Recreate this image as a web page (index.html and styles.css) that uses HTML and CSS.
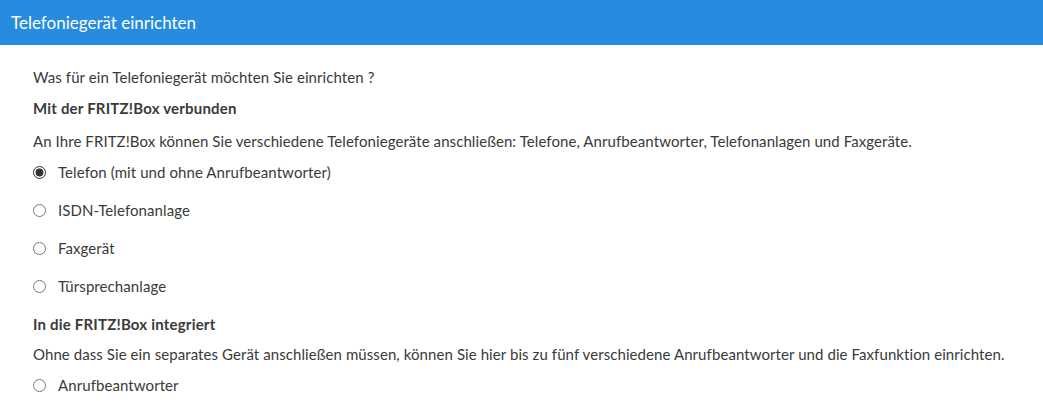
FILE: index.html
```html
<!DOCTYPE html>
<html lang="de">
<head>
<meta charset="utf-8">
<title>Telefoniegerät einrichten</title>
<link rel="stylesheet" href="styles.css">
</head>
<body>
<header class="bar">Telefoniegerät einrichten</header>
<main class="content">
  <p class="intro">Was für ein Telefoniegerät möchten Sie einrichten ?</p>
  <h2 class="heading">Mit der FRITZ!Box verbunden</h2>
  <p class="desc">An Ihre FRITZ!Box können Sie verschiedene Telefoniegeräte anschließen: Telefone, Anrufbeantworter, Telefonanlagen und Faxgeräte.</p>
  <div class="options">
    <label class="option"><input type="radio" name="dev" checked><span>Telefon (mit und ohne Anrufbeantworter)</span></label>
    <label class="option"><input type="radio" name="dev"><span>ISDN-Telefonanlage</span></label>
    <label class="option"><input type="radio" name="dev"><span>Faxgerät</span></label>
    <label class="option"><input type="radio" name="dev"><span>Türsprechanlage</span></label>
  </div>
  <h2 class="heading heading-second">In die FRITZ!Box integriert</h2>
  <p class="desc desc-second">Ohne dass Sie ein separates Gerät anschließen müssen, können Sie hier bis zu fünf verschiedene Anrufbeantworter und die Faxfunktion einrichten.</p>
  <div class="options">
    <label class="option"><input type="radio" name="dev"><span>Anrufbeantworter</span></label>
  </div>
</main>
</body>
</html>
```
FILE: styles.css
```css
html, body {
  margin: 0;
  padding: 0;
  background: #ffffff;
}
body {
  font-family: Lato, "Open Sans", sans-serif;
  font-size: 15px;
  line-height: 20px;
  letter-spacing: 0.08px;
  color: #3a3a3a;
}
.bar {
  height: 45px;
  box-sizing: border-box;
  background: #268ce0;
  color: #ffffff;
  font-size: 17px;
  letter-spacing: 0;
  line-height: 45px;
  padding-left: 11px;
}
.content {
  padding: 22px 33px 0 33px;
  display: flex;
  flex-direction: column;
}
.intro, .desc, .heading {
  margin: 0;
}
.heading {
  font-size: 15px;
  font-weight: bold;
  letter-spacing: 0.2px;
  margin-top: 11px;
}
.desc {
  margin-top: 13px;
}
.options {
  display: flex;
  flex-direction: column;
  gap: 18px;
  margin-top: 11px;
}
.option {
  display: flex;
  align-items: center;
  height: 20px;
}
.option input {
  margin: 0 12px 0 0;
  width: 13px;
  height: 13px;
  accent-color: #333333;
}
.heading-second {
  margin-top: 18px;
}
.desc-second {
  margin-top: 10px;
}
```
